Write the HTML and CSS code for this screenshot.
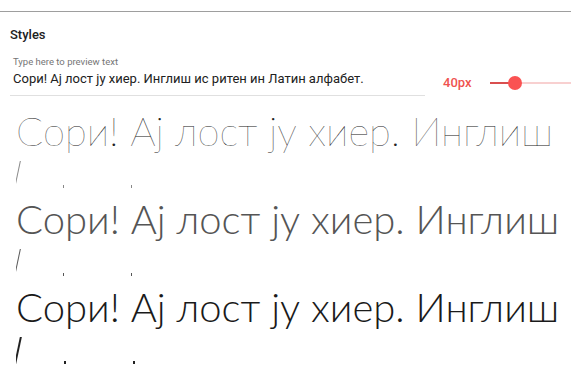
FILE: index.html
```html
<!DOCTYPE html>
<html lang="sr">
<head>
    <meta charset="UTF-8">
    <meta name="viewport" content="width=device-width, initial-scale=1.0">
    <title>Styles</title>
    <link rel="stylesheet" href="styles.css">
</head>
<body>
    <div class="page">
        <h2 class="section-title">Styles</h2>

        <div class="toolbar">
            <div class="preview-field">
                <label class="preview-label" for="previewInput">Type here to preview text</label>
                <div class="preview-input" id="previewInput">Сори! Ај лост ју хиер. Инглиш ис ритен ин Латин алфабет.</div>
            </div>
            <div class="size-control">
                <span class="size-value">40px</span>
                <div class="slider">
                    <div class="slider-fill"></div>
                    <div class="slider-thumb"></div>
                </div>
            </div>
        </div>

        <div class="specimens">
            <div class="specimen specimen-thin">
                <div class="specimen-text">Сори! Ај лост ју хиер. Инглиш</div>
                <div class="specimen-clip"><i class="mark mark-tall"></i><i class="mark mark-a"></i><i class="mark mark-b"></i></div>
            </div>
            <div class="specimen specimen-extralight">
                <div class="specimen-text">Сори! Ај лост ју хиер. Инглиш</div>
                <div class="specimen-clip"><i class="mark mark-tall"></i><i class="mark mark-a"></i><i class="mark mark-b"></i></div>
            </div>
            <div class="specimen specimen-light">
                <div class="specimen-text">Сори! Ај лост ју хиер. Инглиш</div>
                <div class="specimen-clip"><i class="mark mark-tall"></i><i class="mark mark-a"></i><i class="mark mark-b"></i></div>
            </div>
        </div>
    </div>
</body>
</html>
```

FILE: styles.css
```css
body {
    margin: 0;
    padding: 0;
    background-color: #fff;
    font-family: Roboto, 'Liberation Sans', sans-serif;
    color: #212121;
    overflow: hidden;
}
.page {
    border-top: 1px solid #9e9e9e;
    margin-top: 11px;
    padding-left: 10px;
}
.section-title {
    margin: 0;
    padding-top: 14px;
    font-size: 13px;
    font-weight: 500;
    line-height: 18px;
    color: #212121;
}
.toolbar {
    display: flex;
    align-items: flex-end;
    margin-top: 12px;
}
.preview-field {
    width: 415px;
    border-bottom: 1px solid #e0e0e0;
    padding-left: 3px;
    box-sizing: border-box;
}
.preview-label {
    display: block;
    font-size: 9.5px;
    line-height: 12px;
    color: #757575;
}
.preview-input {
    font-size: 13px;
    line-height: 18px;
    padding: 2px 0 7px;
    color: #212121;
}
.size-control {
    display: flex;
    align-items: center;
    flex: 1;
    padding-left: 18px;
    padding-bottom: 6px;
}
.size-value {
    color: #ef5350;
    font-size: 13px;
    font-weight: 500;
    width: 47px;
}
.slider {
    position: relative;
    flex: 1;
    height: 2px;
    background-color: #f8d0d0;
}
.slider-fill {
    width: 25px;
    height: 2px;
    background-color: #d94f4f;
}
.slider-thumb {
    position: absolute;
    left: 18px;
    top: -6px;
    width: 14px;
    height: 14px;
    border-radius: 50%;
    background-color: #fa5252;
}
.specimens {
    margin-top: 12px;
    margin-left: 6px;
}
.specimen {
    height: 88px;
    overflow: hidden;
}
.specimen-text {
    font-family: Lato, 'Noto Sans', sans-serif;
    font-size: 40px;
    line-height: 46px;
    color: #212121;
    white-space: nowrap;
}
.specimen-thin .specimen-text {
    font-weight: 100;
    color: #222;
}
.specimen-extralight .specimen-text {
    font-weight: 300;
    color: #555;
}
.specimen-light .specimen-text {
    font-weight: 300;
    color: #1a1a1a;
}
.specimen-clip {
    display: flex;
    align-items: flex-end;
    height: 34px;
}
.mark {
    display: block;
    width: 1px;
    background-color: #212121;
}
.mark-tall {
    height: 27px;
    transform: skewX(-12deg);
    margin-left: 1px;
}
.mark-a {
    height: 3px;
    margin-left: 45px;
}
.mark-b {
    height: 3px;
    margin-left: 67px;
}
.specimen-thin .mark { background-color: #888; }
.specimen-extralight .mark { background-color: #555; }
.specimen-light .mark { width: 2px; }
```
